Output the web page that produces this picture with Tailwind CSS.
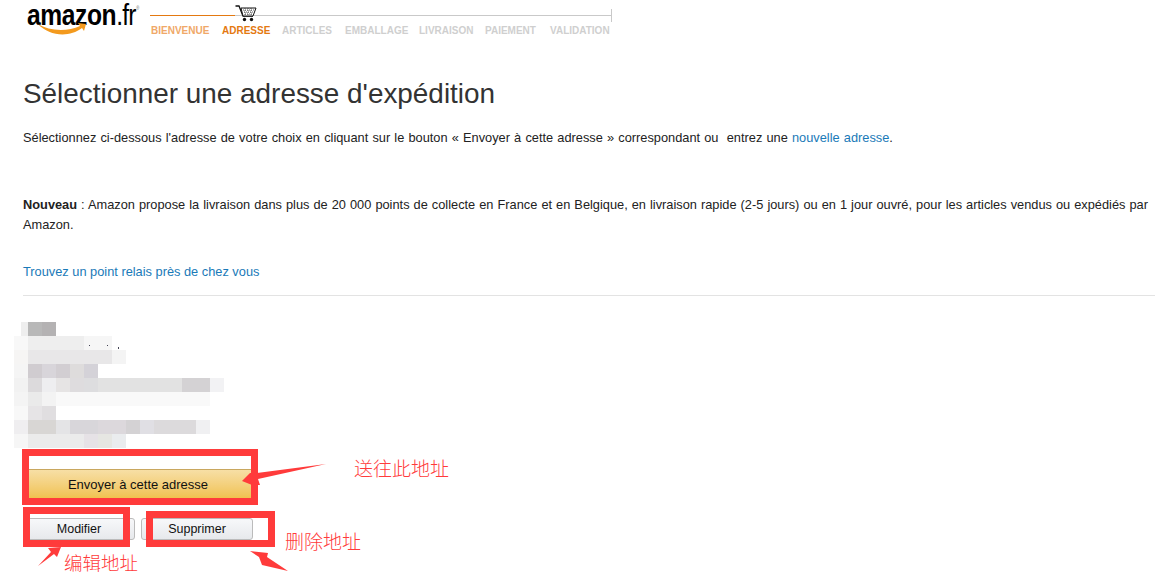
<!DOCTYPE html>
<html lang="fr">
<head>
    <meta charset="UTF-8">
    <title>Sélectionner une adresse d'expédition</title>
    <script src="https://cdn.jsdelivr.net/npm/@tailwindcss/browser@4"></script>
</head>
<body class="relative h-[577px] w-[1155px] overflow-hidden bg-white font-['Liberation_Sans',Arial,sans-serif] text-[12.8px] text-[#222]">
    <!-- header -->
    <div class="flex h-[65px]">
        <div class="relative ml-[27px] h-[40px] w-[123px]">
            <div class="flex origin-left scale-x-[0.82] items-baseline text-[30px] leading-[30px] font-bold tracking-[-0.5px] text-black">amazon<span class="font-normal tracking-[-1px]">.fr</span><span class="ml-[1px] self-start pt-[6px] text-[5px] leading-[5px] font-normal tracking-normal text-[#666]">®</span></div>
            <svg class="absolute top-[22px] left-[10px]" width="50" height="14" viewBox="0 0 50 14">
                <path d="M1 2 C12 9 30 10 43 4 L41 1 L49 2 L47 9 L45 6 C32 16 12 14 1 2 Z" fill="#f39a1e"/>
            </svg>
        </div>
        <div class="w-[462px]">
            <div class="relative h-[24px]">
                <div class="absolute top-[15px] left-0 h-px w-full bg-[#c9c9c9]"></div>
                <div class="absolute top-[15px] left-0 h-px w-[85px] bg-[#e47911]"></div>
                <div class="absolute top-[9px] right-0 h-[13px] w-px bg-[#c9c9c9]"></div>
                <svg class="absolute top-[5px] left-[85px]" width="22" height="17" viewBox="0 0 22 17">
                    <path d="M0.5 1 H4 L8 11 H18" fill="none" stroke="#111" stroke-width="1.3"/>
                    <path d="M6 3 H21 L18 11 H8 Z" fill="#fff" stroke="#111" stroke-width="1"/>
                    <path d="M8 5 H19 M9 7 H18 M10 9 H17 M10 3 V11 M13 3 V11 M16 3 V11" stroke="#333" stroke-width="0.8" stroke-dasharray="1 1" fill="none"/>
                    <circle cx="9.5" cy="14.5" r="1.7" fill="#111"/>
                    <circle cx="16.5" cy="14.5" r="1.7" fill="#111"/>
                </svg>
            </div>
            <div class="flex pl-px text-[10px] leading-[13px] font-bold text-[#cfcfcf]">
                <span class="w-[71px] text-[#f0a868]">BIENVENUE</span>
                <span class="w-[60px] text-[#e47911]">ADRESSE</span>
                <span class="w-[63px]">ARTICLES</span>
                <span class="w-[74px]">EMBALLAGE</span>
                <span class="w-[66px]">LIVRAISON</span>
                <span class="w-[65px]">PAIEMENT</span>
                <span>VALIDATION</span>
            </div>
        </div>
    </div>

    <!-- page content -->
    <main class="pl-[23px]">
        <h1 class="pt-[13px] text-[27.9px] leading-[32px] font-normal text-[#333]">Sélectionner une adresse d'expédition</h1>
        <p class="pt-[20px] leading-[16px] [word-spacing:0.6px]">Sélectionnez ci-dessous l'adresse de votre choix en cliquant sur le bouton « Envoyer à cette adresse » correspondant ou &nbsp;entrez une <a class="text-[#1a7ab8]">nouvelle adresse</a>.</p>
        <p class="w-[1125px] pt-[49px] leading-[20px] text-justify"><b>Nouveau</b> : Amazon propose la livraison dans plus de 20 000 points de collecte en France et en Belgique, en livraison rapide (2-5 jours) ou en 1 jour ouvré, pour les articles vendus ou expédiés par Amazon.</p>
        <p class="pt-[29px] leading-[16px]"><a class="text-[#1a7ab8]">Trouvez un point relais près de chez vous</a></p>
        <div class="mt-[15px] h-px bg-[#e3e3e3]"></div>

        <!-- blurred address -->
        <div class="mt-[26px] ml-[-9px] h-[126px] w-[210px]">
            <div class="flex h-[14px]"><i class="ml-[7px] w-[7px] bg-[#eeeeee]"></i><i class="w-[14px] bg-[#b8b8b8]"></i><i class="w-[14px] bg-[#b4b2b3]"></i></div>
            <div class="flex h-[14px]"><i class="w-[14px] bg-[#f8f8f8]"></i><i class="w-[56px] bg-[#eeeeee]"></i><i class="w-[28px] bg-[#f6f6f6]"></i></div>
            <div class="flex h-[14px]"><i class="w-[14px] bg-[#f6f5f4]"></i><i class="w-[84px] bg-[#e8e7e8]"></i><i class="w-[14px] bg-[#f4f4f4]"></i></div>
            <div class="flex h-[14px]"><i class="w-[14px] bg-[#f5f5f5]"></i><i class="w-[14px] bg-[#d0ccd0]"></i><i class="w-[14px] bg-[#d8d5da]"></i><i class="w-[14px] bg-[#d2ced2]"></i><i class="w-[14px] bg-[#dedcdc]"></i><i class="w-[14px] bg-[#d4d2d8]"></i></div>
            <div class="flex h-[14px]"><i class="w-[14px] bg-[#f2f2f2]"></i><i class="w-[14px] bg-[#dcdadc]"></i><i class="w-[14px] bg-[#eeeef0]"></i><i class="w-[14px] bg-[#e6e4e4]"></i><i class="w-[14px] bg-[#dedcde]"></i><i class="w-[14px] bg-[#dddddf]"></i><i class="w-[84px] bg-[#e2e2e2]"></i><i class="w-[28px] bg-[#d4d2d4]"></i><i class="w-[14px] bg-[#f2f2f4]"></i></div>
            <div class="flex h-[14px]"><i class="w-[14px] bg-[#f4f4f4]"></i><i class="w-[14px] bg-[#eaeaea]"></i><i class="w-[14px] bg-[#f3f3f3]"></i><i class="w-[154px] bg-[#f9f9f9]"></i></div>
            <div class="flex h-[14px]"><i class="w-[14px] bg-[#f8f8f8]"></i><i class="w-[14px] bg-[#e6e4e6]"></i><i class="w-[14px] bg-[#e0dee0]"></i></div>
            <div class="flex h-[14px]"><i class="w-[14px] bg-[#efeef0]"></i><i class="w-[28px] bg-[#d8d6d4]"></i><i class="w-[14px] bg-[#e4e4e6]"></i><i class="w-[28px] bg-[#d8d6da]"></i><i class="w-[28px] bg-[#dcd8dc]"></i><i class="w-[14px] bg-[#d4d2d4]"></i><i class="w-[14px] bg-[#e0dfe4]"></i><i class="w-[42px] bg-[#dcdadc]"></i><i class="w-[14px] bg-[#f0f0f2]"></i></div>
            <div class="flex h-[14px]"><i class="w-[14px] bg-[#f6f6f6]"></i><i class="w-[56px] bg-[#ebebeb]"></i><i class="w-[14px] bg-[#e6e2e6]"></i><i class="w-[14px] bg-[#e6e6e2]"></i><i class="w-[14px] bg-[#eaecee]"></i></div>
        </div>

        <!-- buttons -->
        <button class="mt-[21px] block h-[30px] w-[230px] border-t border-[#c9a75f] bg-linear-to-b from-[#f7dfa5] to-[#f0c14b] text-center text-[13px] text-[#111]">Envoyer à cette adresse</button>
        <div class="mt-[19px] flex gap-[6px]">
            <button class="h-[22px] w-[112px] rounded-[3px] border border-[#bbb] bg-linear-to-b from-[#f7f8fa] to-[#e7e9ec] text-[12.5px] text-[#111]">Modifier</button>
            <button class="h-[22px] w-[112px] rounded-[3px] border border-[#bbb] bg-linear-to-b from-[#f7f8fa] to-[#e7e9ec] text-[12.5px] text-[#111]">Supprimer</button>
        </div>
    </main>

    <!-- red annotations drawn over the page -->
    <div class="absolute top-[449px] left-[22px] h-[56px] w-[236px] border-[7px] border-[#ff3b3b]"></div>
    <div class="absolute top-[507px] left-[23px] h-[40px] w-[107px] border-[7px] border-[#ff3b3b]"></div>
    <div class="absolute top-[511px] left-[146px] h-[36px] w-[129px] border-[7px] border-[#ff3b3b]"></div>
    <svg class="absolute top-0 left-0" width="1155" height="577" viewBox="0 0 1155 577">
        <polygon points="326,464 257,473 250,473 242,481 252,485 260,485 258,479" fill="#ff3b3b"/>
        <polygon points="38,566 51,552 48,548 61,547 57,557 54,554" fill="#ff3b3b"/>
        <polygon points="250,551 268,553 267,557 288,571 262,565 259,557" fill="#ff3b3b"/>
        <path d="M89 345h1v1h-1z M107 345h1v1h-1z M118 347h1v2h-1z" fill="#445"/>
    </svg>
    <span class="absolute top-[457px] left-[354px] font-['Noto_Sans_CJK_SC',sans-serif] text-[19px] leading-[22px] font-light text-[#ff3b3b]">送往此地址</span>
    <span class="absolute top-[551px] left-[64px] font-['Noto_Sans_CJK_SC',sans-serif] text-[18.5px] leading-[22px] font-light text-[#ff3b3b]">编辑地址</span>
    <span class="absolute top-[530px] left-[285px] font-['Noto_Sans_CJK_SC',sans-serif] text-[19px] leading-[22px] font-light text-[#ff3b3b]">删除地址</span>
</body>
</html>
